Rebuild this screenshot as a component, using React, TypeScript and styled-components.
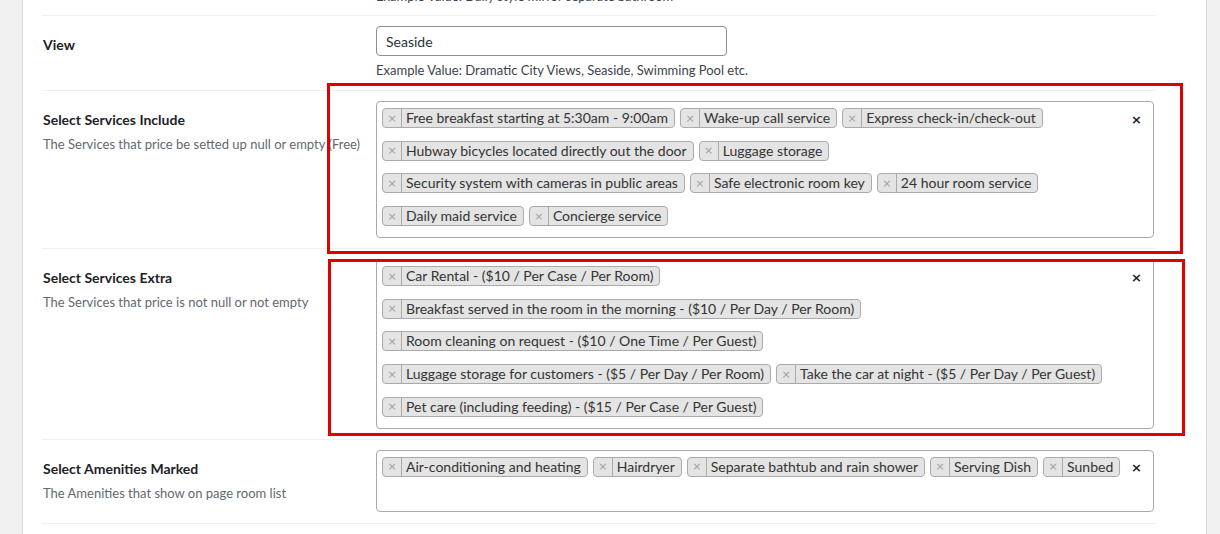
import React from "react";
import styled, { createGlobalStyle } from "styled-components";

const GlobalStyle = createGlobalStyle`
  html, body { margin: 0; padding: 0; background: #f0f0f1; }
  body { font-family: "Lato", "Open Sans", sans-serif; }
`;

const Page = styled.div`
  position: relative;
  width: 1220px;
  height: 534px;
  overflow: hidden;
  display: flex;
  background: #f0f0f1;
`;

const Gutter = styled.div<{ $w: number }>`
  flex: 0 0 ${(p) => p.$w}px;
`;

const Panel = styled.div`
  flex: 0 0 1185px;
  background: #fff;
  border-left: 1px solid #dcdcde;
  border-right: 1px solid #dcdcde;
  box-sizing: border-box;
  padding: 0 50px 0 19px;
`;

const Table = styled.div`
  width: 1113px;
  display: flex;
  flex-direction: column;
`;

const Row = styled.div<{ $cut?: boolean }>`
  display: flex;
  border-bottom: 1px solid #f0f0f1;
  ${(p) => (p.$cut ? "height: 15px; overflow: hidden; align-items: flex-end;" : "")}
`;

const Head = styled.div`
  flex: 0 0 334px;
  box-sizing: border-box;
  padding: 20px 10px 20px 1px;
`;

const Cell = styled.div`
  flex: 1;
  padding: 10px 0;
`;

const CutCell = styled.div`
  flex: 1;
  padding-left: 334px;
  margin-bottom: 9px;
`;

const Label = styled.div`
  font-family: "Lato", sans-serif;
  font-size: 14px;
  font-weight: 700;
  line-height: 18px;
  color: #1d2327;
`;

const HeadDesc = styled.div`
  margin-top: 5px;
  font-family: "Lato", sans-serif;
  font-size: 13px;
  line-height: 20px;
  color: #646970;
  white-space: nowrap;
`;

const FieldDesc = styled.div`
  margin-top: 4px;
  font-family: "Lato", sans-serif;
  font-size: 13px;
  line-height: 20px;
  color: #3c434a;
  white-space: nowrap;
`;

const TextInput = styled.div<{ $w: number }>`
  width: ${(p) => p.$w}px;
  height: 30px;
  box-sizing: border-box;
  border: 1px solid #8c8f94;
  border-radius: 4px;
  padding: 0 9px;
  display: flex;
  align-items: center;
  font-family: "Lato", sans-serif;
  font-size: 14px;
  color: #2c3338;
  background: #fff;
`;

const SelectBox = styled.div`
  position: relative;
  width: 778px;
  box-sizing: border-box;
  border: 1px solid #aaa;
  border-radius: 4px;
  padding: 6px 40px 11px 5px;
  display: flex;
  flex-direction: column;
  gap: 12.7px;
  background: #fff;
`;

const TagLine = styled.div`
  display: flex;
  gap: 5px;
`;

const SearchLine = styled.div`
  height: 10px;
`;

const Tag = styled.div`
  display: flex;
  align-items: stretch;
  height: 20px;
  box-sizing: border-box;
  border: 1px solid #aaa;
  border-radius: 4px;
  background: #e4e4e4;
  white-space: nowrap;
`;

const TagRemove = styled.span`
  flex: 0 0 18px;
  border-right: 1px solid #aaa;
  display: flex;
  align-items: center;
  justify-content: center;
  font-family: "DejaVu Sans", sans-serif;
  font-size: 11px;
  color: #a0a0a0;
`;

const TagText = styled.span`
  padding: 0 6px 0 4px;
  font-family: "Lato", sans-serif;
  font-size: 14px;
  line-height: 18px;
  color: #333;
`;

const ClearAll = styled.span`
  position: absolute;
  top: 7px;
  right: 11px;
  height: 20px;
  display: flex;
  align-items: center;
  font-family: "DejaVu Sans", sans-serif;
  font-size: 13px;
  font-weight: 700;
  color: #1d2327;
`;

const Highlight = styled.div<{ $x: number; $y: number; $w: number; $h: number }>`
  position: absolute;
  left: ${(p) => p.$x}px;
  top: ${(p) => p.$y}px;
  width: ${(p) => p.$w}px;
  height: ${(p) => p.$h}px;
  box-sizing: border-box;
  border: 3px solid #e00000;
  pointer-events: none;
`;

type Field = {
  label: string;
  desc: string;
  lines: string[][];
  search?: boolean;
};

const fields: Field[] = [
  {
    label: "Select Services Include",
    desc: "The Services that price be setted up null or empty (Free)",
    lines: [
      ["Free breakfast starting at 5:30am - 9:00am", "Wake-up call service", "Express check-in/check-out"],
      ["Hubway bicycles located directly out the door", "Luggage storage"],
      ["Security system with cameras in public areas", "Safe electronic room key", "24 hour room service"],
      ["Daily maid service", "Concierge service"],
    ],
  },
  {
    label: "Select Services Extra",
    desc: "The Services that price is not null or not empty",
    lines: [
      ["Car Rental - ($10 / Per Case / Per Room)"],
      ["Breakfast served in the room in the morning - ($10 / Per Day / Per Room)"],
      ["Room cleaning on request - ($10 / One Time / Per Guest)"],
      ["Luggage storage for customers - ($5 / Per Day / Per Room)", "Take the car at night - ($5 / Per Day / Per Guest)"],
      ["Pet care (including feeding) - ($15 / Per Case / Per Guest)"],
    ],
  },
  {
    label: "Select Amenities Marked",
    desc: "The Amenities that show on page room list",
    lines: [["Air-conditioning and heating", "Hairdryer", "Separate bathtub and rain shower", "Serving Dish", "Sunbed"]],
    search: true,
  },
];

function MultiSelect({ lines, search }: { lines: string[][]; search?: boolean }) {
  return (
    <SelectBox>
      {lines.map((line, i) => (
        <TagLine key={i}>
          {line.map((t) => (
            <Tag key={t}>
              <TagRemove>×</TagRemove>
              <TagText>{t}</TagText>
            </Tag>
          ))}
        </TagLine>
      ))}
      {search && <SearchLine />}
      <ClearAll>×</ClearAll>
    </SelectBox>
  );
}

export default function App() {
  return (
    <Page>
      <GlobalStyle />
      <Gutter $w={22} />
      <Panel>
        <Table>
          <Row $cut>
            <CutCell>
              <FieldDesc>Example Value: Daily style mirror separate bathroom</FieldDesc>
            </CutCell>
          </Row>
          <Row>
            <Head>
              <Label>View</Label>
            </Head>
            <Cell>
              <TextInput $w={351}>Seaside</TextInput>
              <FieldDesc>Example Value: Dramatic City Views, Seaside, Swimming Pool etc.</FieldDesc>
            </Cell>
          </Row>
          {fields.map((f) => (
            <Row key={f.label}>
              <Head>
                <Label>{f.label}</Label>
                <HeadDesc>{f.desc}</HeadDesc>
              </Head>
              <Cell>
                <MultiSelect lines={f.lines} search={f.search} />
              </Cell>
            </Row>
          ))}
          <Row>
            <Head />
            <Cell>
              <TextInput $w={772} />
            </Cell>
          </Row>
        </Table>
      </Panel>
      <Gutter $w={13} />
      <Highlight $x={327} $y={83} $w={856} $h={171} />
      <Highlight $x={328} $y={259} $w={857} $h={177} />
    </Page>
  );
}
